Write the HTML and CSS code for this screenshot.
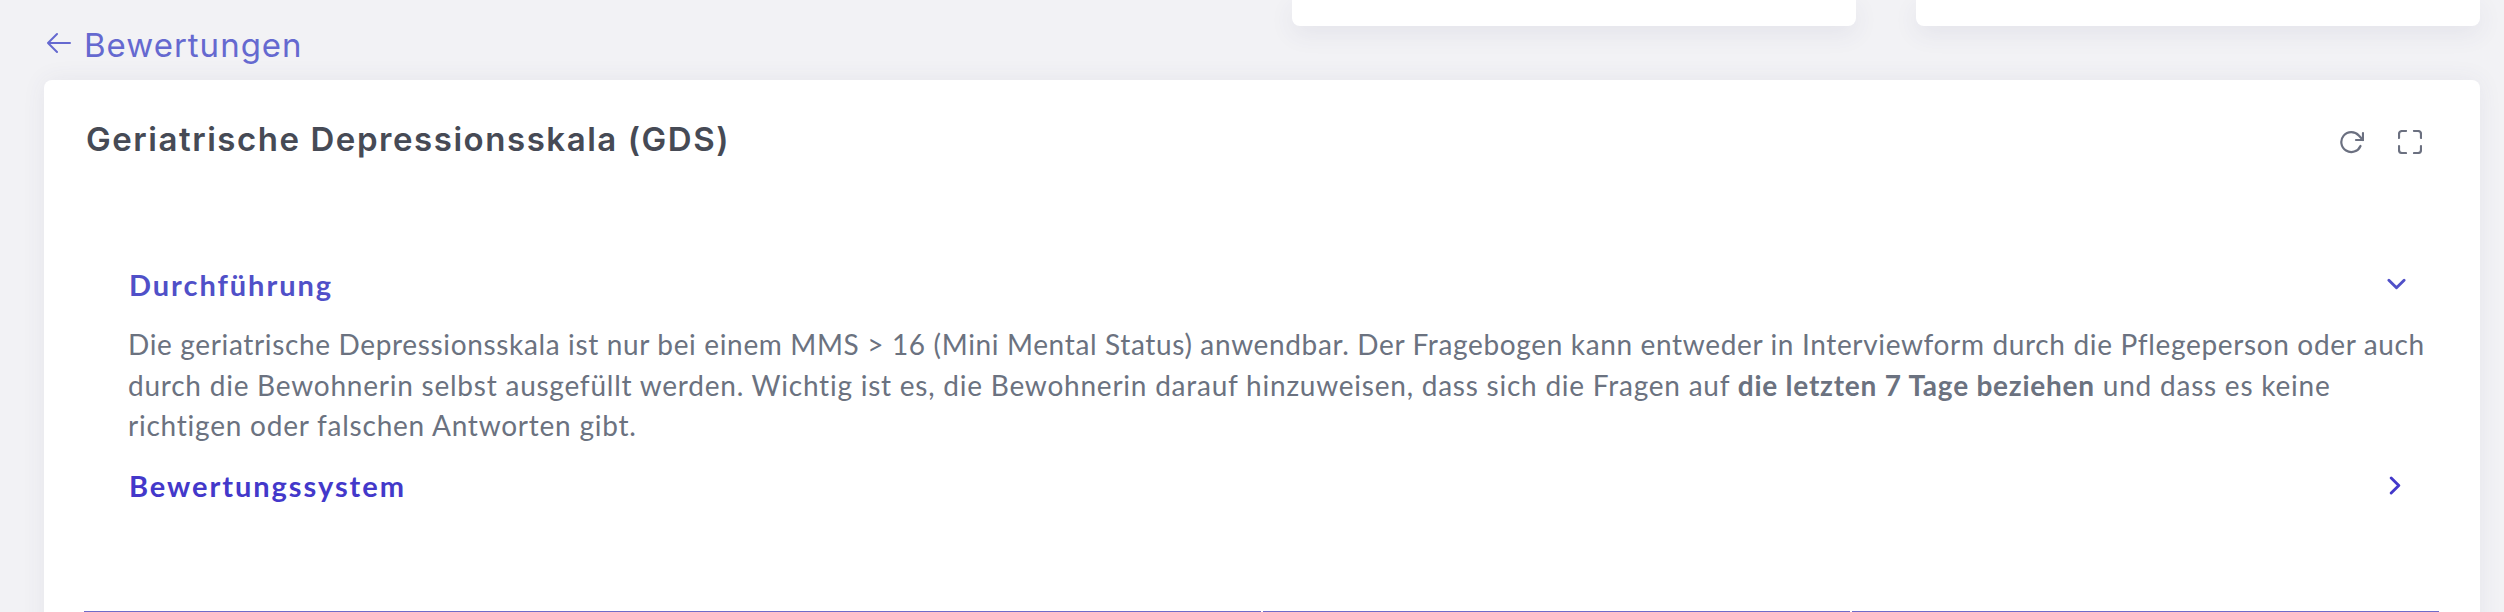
FILE: index.html
```html
<!DOCTYPE html>
<html lang="de">
<head>
    <meta charset="UTF-8">
    <title>Geriatrische Depressionsskala (GDS)</title>
    <link rel="stylesheet" href="styles.css">
</head>
<body>
    <div class="top-cards">
        <div class="stub-card"></div>
        <div class="stub-card"></div>
    </div>

    <a class="back-link" href="#">
        <svg class="back-icon" viewBox="0 0 24 24" fill="none" stroke="currentColor" stroke-width="2" stroke-linecap="round" stroke-linejoin="round">
            <path d="M23 12H1M10 3l-9 9 9 9"/>
        </svg>
        Bewertungen
    </a>

    <div class="card">
        <div class="card-head">
            <h1 class="card-title">Geriatrische Depressionsskala (GDS)</h1>
            <div class="card-tools">
                <svg class="tool-icon" viewBox="0 0 24 24" fill="none" stroke="currentColor" stroke-width="2.2" stroke-linecap="round" stroke-linejoin="round">
                    <path d="M23 3v7h-7"/>
                    <path d="M20.5 16a10 10 0 1 1-1.7-10.6L23 10"/>
                </svg>
                <svg class="tool-icon" viewBox="0 0 24 24" fill="none" stroke="currentColor" stroke-width="2.2" stroke-linecap="round" stroke-linejoin="round">
                    <path d="M8 1H4a3 3 0 0 0-3 3v4M16 1h4a3 3 0 0 1 3 3v4M23 16v4a3 3 0 0 1-3 3h-4M8 23H4a3 3 0 0 1-3-3v-4"/>
                </svg>
            </div>
        </div>

        <div class="accordion">
            <div class="acc-head acc-open">
                <span>Durchführung</span>
                <svg class="chev-down" viewBox="0 0 20 12" fill="none" stroke="currentColor" stroke-width="3" stroke-linecap="round" stroke-linejoin="round">
                    <path d="M2 2l8 8 8-8"/>
                </svg>
            </div>
            <p class="acc-body">
                <span class="line line-tight">Die geriatrische Depressionsskala ist nur bei einem MMS &gt; 16 (Mini Mental Status) anwendbar. Der Fragebogen kann entweder in Interviewform durch die Pflegeperson oder auch</span>
                <span class="line">durch die Bewohnerin selbst ausgefüllt werden. Wichtig ist es, die Bewohnerin darauf hinzuweisen, dass sich die Fragen auf <strong>die letzten 7 Tage beziehen</strong> und dass es keine</span>
                <span class="line">richtigen oder falschen Antworten gibt.</span>
            </p>
            <div class="acc-head">
                <span>Bewertungssystem</span>
                <svg class="chev-right" viewBox="0 0 12 20" fill="none" stroke="currentColor" stroke-width="3" stroke-linecap="round" stroke-linejoin="round">
                    <path d="M2 2l8 8-8 8"/>
                </svg>
            </div>
        </div>

        <div class="table-top">
            <div class="col col-wide"></div>
            <div class="col"></div>
            <div class="col"></div>
        </div>
    </div>
</body>
</html>
```

FILE: styles.css
```css
html, body {
    margin: 0;
    padding: 0;
    height: 612px;
    overflow: hidden;
    background-color: #f2f2f5;
    font-family: "Lato", "Noto Sans", sans-serif;
}

.top-cards {
    display: flex;
    justify-content: flex-end;
    gap: 60px;
    height: 26px;
    padding-right: 24px;
}

.stub-card {
    width: 564px;
    background-color: white;
    border-radius: 0 0 8px 8px;
    box-shadow: 0 8px 24px rgba(70, 70, 110, 0.08);
}

.back-link {
    display: flex;
    align-items: center;
    gap: 13px;
    height: 38px;
    margin-bottom: 16px;
    padding-left: 47px;
    color: #6569d0;
    font-family: "Inter", "Lato", sans-serif;
    font-size: 33px;
    letter-spacing: 1px;
    text-decoration: none;
}

.back-icon {
    width: 24px;
    height: 24px;
    margin-top: -4px;
}

.card {
    margin: 0 24px 0 44px;
    height: 560px;
    padding: 0 40px;
    background-color: white;
    border-radius: 8px;
    box-shadow: 0 0 24px rgba(70, 70, 110, 0.07);
}

.card-head {
    display: flex;
    justify-content: space-between;
    align-items: center;
    height: 118px;
    padding-right: 18px;
    margin-left: 2px;
}

.card-title {
    margin: 0;
    color: #464a55;
    font-family: "Inter", "Lato", sans-serif;
    font-size: 33px;
    font-weight: 600;
    letter-spacing: 1.55px;
}

.card-tools {
    display: flex;
    gap: 34px;
    margin-top: 6px;
}

.tool-icon {
    width: 24px;
    height: 24px;
    color: #6b7080;
}

.accordion {
    padding: 0 0 0 44px;
}

.acc-head {
    display: flex;
    justify-content: space-between;
    align-items: center;
    height: 40px;
    padding: 0 34px 0 1px;
    color: #4338ca;
    font-size: 29px;
    font-weight: 700;
    letter-spacing: 1.95px;
}

.acc-open {
    margin-top: 66px;
    color: #5050c8;
}

.chev-down {
    width: 19px;
    height: 12px;
}

.chev-right {
    width: 12px;
    height: 19px;
    margin-right: 5px;
}

.acc-body {
    margin: 20px 0 0;
    color: #6b7280;
    font-size: 28px;
    letter-spacing: 0.77px;
    line-height: 40.5px;
}

.line {
    display: block;
    white-space: nowrap;
}

.line-tight {
    letter-spacing: 0.65px;
}

.acc-body strong {
    font-weight: 700;
}

.acc-body + .acc-head {
    margin-top: 20px;
}

.table-top {
    display: flex;
    gap: 2px;
    margin-top: 105.5px;
    margin-right: -1px;
}

.col {
    flex: 0 0 587px;
    height: 1px;
    background-color: #6f6bc8;
}

.col-wide {
    flex: 0 0 1177px;
}
```
